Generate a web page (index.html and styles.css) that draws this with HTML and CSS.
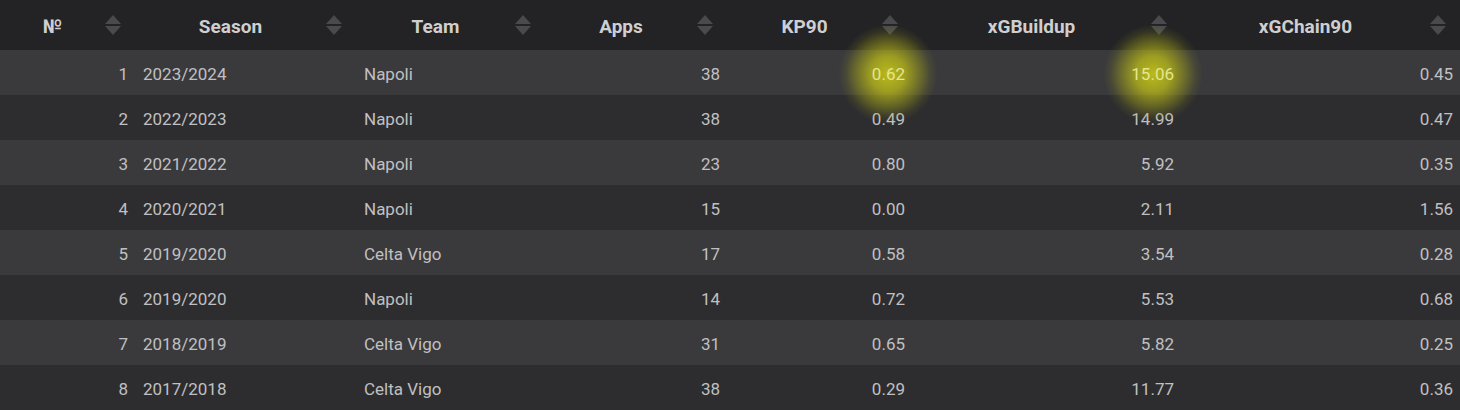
FILE: index.html
```html
<!DOCTYPE html>
<html>
<head>
<meta charset="utf-8">
<link rel="stylesheet" href="styles.css">
</head>
<body>
<table class="stats">
  <colgroup>
    <col class="c-num"><col class="c-season"><col class="c-team"><col class="c-apps"><col class="c-kp"><col class="c-build"><col class="c-chain">
  </colgroup>
  <thead>
    <tr>
      <th><div class="th-in"><span class="lbl">№</span><span class="sort"><i class="up"></i><i class="down"></i></span></div></th>
      <th><div class="th-in"><span class="lbl">Season</span><span class="sort"><i class="up"></i><i class="down"></i></span></div></th>
      <th><div class="th-in"><span class="lbl">Team</span><span class="sort"><i class="up"></i><i class="down"></i></span></div></th>
      <th><div class="th-in"><span class="lbl">Apps</span><span class="sort"><i class="up"></i><i class="down"></i></span></div></th>
      <th><div class="th-in"><span class="lbl">KP90</span><span class="sort"><i class="up"></i><i class="down"></i></span></div></th>
      <th><div class="th-in"><span class="lbl">xGBuildup</span><span class="sort"><i class="up"></i><i class="down"></i></span></div></th>
      <th><div class="th-in"><span class="lbl">xGChain90</span><span class="sort"><i class="up"></i><i class="down"></i></span></div></th>
    </tr>
  </thead>
  <tbody>
    <tr><td class="r">1</td><td>2023/2024</td><td>Napoli</td><td class="r">38</td><td class="r"><span class="glow">0.62</span></td><td class="r"><span class="glow">15.06</span></td><td class="r">0.45</td></tr>
    <tr><td class="r">2</td><td>2022/2023</td><td>Napoli</td><td class="r">38</td><td class="r">0.49</td><td class="r">14.99</td><td class="r">0.47</td></tr>
    <tr><td class="r">3</td><td>2021/2022</td><td>Napoli</td><td class="r">23</td><td class="r">0.80</td><td class="r">5.92</td><td class="r">0.35</td></tr>
    <tr><td class="r">4</td><td>2020/2021</td><td>Napoli</td><td class="r">15</td><td class="r">0.00</td><td class="r">2.11</td><td class="r">1.56</td></tr>
    <tr><td class="r">5</td><td>2019/2020</td><td>Celta Vigo</td><td class="r">17</td><td class="r">0.58</td><td class="r">3.54</td><td class="r">0.28</td></tr>
    <tr><td class="r">6</td><td>2019/2020</td><td>Napoli</td><td class="r">14</td><td class="r">0.72</td><td class="r">5.53</td><td class="r">0.68</td></tr>
    <tr><td class="r">7</td><td>2018/2019</td><td>Celta Vigo</td><td class="r">31</td><td class="r">0.65</td><td class="r">5.82</td><td class="r">0.25</td></tr>
    <tr><td class="r">8</td><td>2017/2018</td><td>Celta Vigo</td><td class="r">38</td><td class="r">0.29</td><td class="r">11.77</td><td class="r">0.36</td></tr>
  </tbody>
</table>
</body>
</html>
```

FILE: styles.css
```css
html, body {
  margin: 0;
  padding: 0;
  background: #2d2d2f;
  overflow: hidden;
}

.stats {
  width: 1460px;
  border-collapse: collapse;
  table-layout: fixed;
  font-family: Roboto, "Liberation Sans", sans-serif;
  font-size: 17px;
  color: #c0c0c2;
}

.c-num { width: 135px; }
.c-season { width: 221px; }
.c-team { width: 189px; }
.c-apps { width: 182px; }
.c-kp { width: 185px; }
.c-build { width: 269px; }
.c-chain { width: 279px; }

.stats thead th {
  height: 50px;
  padding: 0;
  background: #232325;
  font-weight: 700;
  font-size: 19px;
  color: #cfcfd1;
}

.th-in {
  display: flex;
  align-items: center;
  padding-right: 14px;
  height: 50px;
}

.lbl {
  flex: 1;
  text-align: center;
  padding-top: 3px;
}

.sort {
  width: 16px;
  display: flex;
  flex-direction: column;
  align-items: center;
  gap: 2px;
}

.sort i {
  display: block;
  width: 0;
  height: 0;
  border-left: 8px solid transparent;
  border-right: 8px solid transparent;
}

.sort .up { border-bottom: 9px solid #4a4a4c; }
.sort .down { border-top: 9px solid #4a4a4c; }

.stats tbody td {
  height: 43px;
  padding: 2px 8px 0;
  vertical-align: middle;
  white-space: nowrap;
}

.stats tbody tr:nth-child(odd) td { background: #3a3a3c; }
.stats tbody tr:nth-child(even) td { background: #2d2d2f; }

.stats td.r { text-align: right; padding-right: 7px; }

.glow {
  position: relative;
  display: inline-block;
  color: #e6e68c;
  z-index: 0;
}

.glow::before {
  content: "";
  position: absolute;
  left: 50%;
  top: 50%;
  width: 100px;
  height: 100px;
  margin-left: -50px;
  margin-top: -50px;
  border-radius: 50%;
  background: radial-gradient(circle, rgba(200, 200, 25, 0.9) 0%, rgba(190, 190, 25, 0.75) 25%, rgba(170, 170, 25, 0.45) 45%, rgba(150, 150, 25, 0.15) 60%, rgba(150, 150, 25, 0) 70%);
  z-index: -1;
}
```
